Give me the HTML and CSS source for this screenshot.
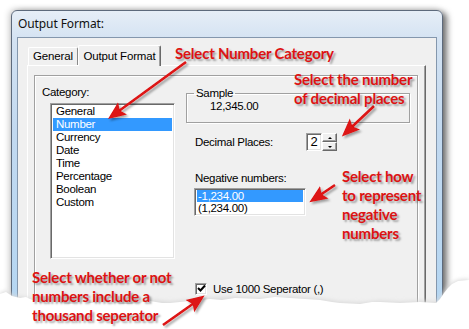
FILE: index.html
```html
<!DOCTYPE html>
<html>
<head>
<meta charset="utf-8">
<link rel="stylesheet" href="styles.css">
</head>
<body>
<div class="stage">
  <div class="window">
    <div class="titlebar">Output Format:</div>
    <div class="client">
      <div class="tabs">
        <div class="tab">General</div>
        <div class="tab active">Output Format</div>
      </div>
      <div class="panel">
        <div class="inner">
          <div class="col-left">
            <div class="lbl cat-lbl">Category:</div>
            <div class="listbox cat">
              <div class="item">General</div>
              <div class="item sel">Number</div>
              <div class="item">Currency</div>
              <div class="item">Date</div>
              <div class="item">Time</div>
              <div class="item">Percentage</div>
              <div class="item">Boolean</div>
              <div class="item">Custom</div>
            </div>
          </div>
          <div class="col-right">
            <fieldset class="group">
              <legend>Sample</legend>
              <div class="sample">12,345.00</div>
            </fieldset>
            <div class="dec-row">
              <span class="dec-lbl">Decimal Places:</span>
              <div class="spin">
                <div class="spin-edit">2</div>
                <div class="spin-btns">
                  <div class="sb"><span class="tri up"></span></div>
                  <div class="sb"><span class="tri down"></span></div>
                </div>
              </div>
            </div>
            <div class="lbl neg-lbl">Negative numbers:</div>
            <div class="listbox neg">
              <div class="item sel">-1,234.00</div>
              <div class="item">(1,234.00)</div>
            </div>
            <div class="check-row">
              <span class="cb"><svg width="9" height="9" viewBox="0 0 9 9"><path d="M1 4 L3.5 6.5 L8 1.5" fill="none" stroke="#000" stroke-width="2"/></svg></span>
              <span>Use 1000 Seperator (,)</span>
            </div>
          </div>
        </div>
      </div>
    </div>
  </div>

  <svg class="torn" width="469" height="329" viewBox="0 0 469 329">
    <defs>
      <filter id="tornshadow" x="-5%" y="-20%" width="110%" height="140%">
        <feGaussianBlur stdDeviation="2"/>
      </filter>
    </defs>
    <polygon fill="#d8d8d8" filter="url(#tornshadow)" points="0,293 6,291 12,295 20,297 30,298 40,302 55,301 70,303 90,302 110,301 130,303 150,300 170,302 190,300 210,298 235,297 260,298 290,297 320,299 340,302 360,303 380,301 400,302 420,301 436,302 440,298 444,292 448,287 452,283 458,280 469,279 469,329 0,329"/>
    <polygon fill="#ffffff" points="0,294 6,292 12,296 20,298 26,297 30,299 40,303 48,301 55,302 70,304 82,302 90,303 110,302 122,304 130,304 150,301 162,303 170,303 190,301 200,300 210,299 222,300 235,298 260,299 275,297 290,298 305,299 320,300 332,302 340,303 360,304 372,302 380,302 400,303 420,302 436,303 440,299 444,293 448,288 452,284 458,281 469,280 469,329 0,329"/>
  </svg>

  <svg class="arrows" width="469" height="329" viewBox="0 0 469 329">
    <defs>
      <filter id="ds" x="-20%" y="-20%" width="140%" height="140%">
        <feDropShadow dx="2" dy="2" stdDeviation="1.2" flood-color="#000" flood-opacity="0.35"/>
      </filter>
      <marker id="ah" markerUnits="userSpaceOnUse" markerWidth="19" markerHeight="16" refX="13" refY="8" orient="auto">
        <path d="M0,0.5 L18,8 L0,15.5 L3.5,8 Z" fill="#dd1212"/>
      </marker>
    </defs>
    <g filter="url(#ds)" stroke="#dd1212" stroke-width="2.5" fill="none">
      <line x1="186" y1="62" x2="112" y2="116" marker-end="url(#ah)"/>
      <line x1="374" y1="106" x2="345.5" y2="133" marker-end="url(#ah)"/>
      <line x1="335" y1="185" x2="313.5" y2="199.5" marker-end="url(#ah)"/>
      <line x1="163" y1="325" x2="200.5" y2="298.5" marker-end="url(#ah)"/>
    </g>
  </svg>

  <div class="note n1">Select Number Category</div>
  <div class="note n2">Select the number<br>of decimal places</div>
  <div class="note n3">Select how<br>to represent<br>negative<br>numbers</div>
  <div class="note n4">Select whether or not<br>numbers include a<br>thousand seperator</div>
</div>
</body>
</html>
```
FILE: styles.css
```css
* { box-sizing: border-box; }
html, body { margin: 0; padding: 0; background: #fff; }
.stage {
  position: relative;
  width: 469px;
  height: 329px;
  overflow: hidden;
  background: #fff;
  padding-top: 10px;
  padding-left: 11px;
  font-family: "Liberation Sans", Arial, sans-serif;
  font-size: 11px;
  color: #000;
}
.window {
  width: 432px;
  height: 310px;
  border: 1px solid #5d6a7c;
  border-radius: 6px 6px 0 0;
  background: linear-gradient(to bottom, #e6eef7 0px, #d3e2f2 30px, #c2d9f0 120px, #b4d6f2 300px);
  box-shadow: 4px 2px 6px rgba(0,0,0,0.55), -2px -1px 6px rgba(0,0,0,0.18);
}
.titlebar {
  height: 26px;
  line-height: 25px;
  padding-left: 6px;
  font-family: "Noto Sans", "Open Sans", sans-serif;
  font-size: 12px;
  letter-spacing: -0.1px;
  color: #111;
}
.client {
  margin: 0 5px;
  height: 290px;
  border: 1px solid #8497ad;
  background: #f0f0f0;
  padding: 7px 0 0 9px;
}
.tabs {
  display: flex;
  align-items: flex-end;
  height: 20px;
}
.tab {
  height: 18px;
  width: 50px;
  margin-left: 1px;
  border-top: 1px solid #fff;
  border-left: 1px solid #fff;
  border-right: 1px solid #8a8a8a;
  border-radius: 2px 2px 0 0;
  text-align: center;
  line-height: 17px;
  background: #f0f0f0;
  letter-spacing: -0.15px;
  font-size: 11.5px;
}
.tab.active {
  position: relative;
  z-index: 1;
  margin-left: 0;
  width: 83px;
  height: 21px;
  margin-bottom: -1px;
  line-height: 20px;
  border-right: 1px solid #696969;
  box-shadow: inset -1px 0 0 #a0a0a0;
}
.panel {
  width: 399px;
  height: 260px;
  border-top: 1px solid #fff;
  border-left: 1px solid #fff;
  border-right: 1px solid #696969;
  border-bottom: 1px solid #696969;
  box-shadow: inset -1px -1px 0 #a0a0a0;
  padding: 9px 0 0 6px;
}
.inner {
  width: 384px;
  height: 240px;
  border: 1px solid #a0a0a0;
  box-shadow: inset 1px 1px 0 #fff, 1px 1px 0 #fff;
  display: flex;
}
.lbl { line-height: 13px; letter-spacing: -0.3px; font-size: 11.5px; }
.col-left { width: 140px; padding-left: 7px; }
.cat-lbl { margin-top: 10px; }
.listbox {
  background: #fff;
  border-top: 1px solid #a0a0a0;
  border-left: 1px solid #a0a0a0;
  border-right: 1px solid #fff;
  border-bottom: 1px solid #fff;
  box-shadow: inset 1px 1px 0 #696969, inset -1px -1px 0 #e3e3e3;
  padding: 1px 2px;
}
.listbox.cat {
  margin: 4px 0 0 8px;
  width: 125px;
  height: 156px;
}
.item {
  height: 13px;
  line-height: 13px;
  padding-left: 3px;
  letter-spacing: -0.3px;
  font-size: 11.5px;
  white-space: nowrap;
}
.item.sel { background: #3399ff; color: #fff; }
.col-right { margin-left: 11px; width: 224px; }
.group {
  margin: 11px 0 0 0;
  padding: 0 0 9px 0;
  width: 224px;
  border: 1px solid #a0a0a0;
  box-shadow: inset 1px 1px 0 #fff, 1px 1px 0 #fff;
  min-width: 0;
}
.group legend {
  margin-left: 7px;
  padding: 0 2px;
  line-height: 13px;
  letter-spacing: -0.3px;
  font-size: 11.5px;
}
.sample {
  padding-left: 23px;
  line-height: 13px;
  letter-spacing: -0.3px;
  font-size: 11.5px;
}
.dec-row {
  display: flex;
  align-items: center;
  margin-top: 10px;
  height: 18px;
  padding-left: 9px;
}
.dec-lbl { width: 111px; letter-spacing: -0.3px; font-size: 11.5px; }
.spin { display: flex; height: 18px; }
.spin-edit {
  width: 16px;
  height: 18px;
  background: #fff;
  border-top: 1px solid #a0a0a0;
  border-left: 1px solid #a0a0a0;
  border-right: 1px solid #fff;
  border-bottom: 1px solid #fff;
  box-shadow: inset 1px 1px 0 #696969, inset -1px -1px 0 #e3e3e3;
  font-size: 13px;
  line-height: 16px;
  text-align: center;
}
.spin-btns { display: flex; flex-direction: column; width: 15px; }
.sb {
  height: 9px;
  background: #f0f0f0;
  border-top: 1px solid #fff;
  border-left: 1px solid #fff;
  border-right: 1px solid #696969;
  border-bottom: 1px solid #696969;
  box-shadow: inset -1px -1px 0 #a0a0a0;
  display: flex;
  align-items: center;
  justify-content: center;
}
.tri { width: 0; height: 0; border-left: 2px solid transparent; border-right: 2px solid transparent; }
.tri.up { border-bottom: 2px solid #000; }
.tri.down { border-top: 2px solid #000; }
.neg-lbl { margin-top: 21px; padding-left: 9px; }
.listbox.neg {
  margin: 3px 0 0 8px;
  width: 112px;
  height: 28px;
}
.listbox.neg .item { height: 12px; line-height: 12px; padding-left: 1px; }
.check-row {
  display: flex;
  align-items: center;
  margin-top: 66px;
  padding-left: 9px;
  height: 13px;
  letter-spacing: -0.3px;
  font-size: 11.5px;
}
.cb {
  width: 12px;
  height: 12px;
  margin-right: 6px;
  background: #fff;
  border-top: 1px solid #a0a0a0;
  border-left: 1px solid #a0a0a0;
  border-right: 1px solid #fff;
  border-bottom: 1px solid #fff;
  box-shadow: inset 1px 1px 0 #696969, inset -1px -1px 0 #e3e3e3;
  display: flex;
  align-items: center;
  justify-content: center;
}
.torn { position: absolute; left: 0; top: 0; }
.arrows { position: absolute; left: 0; top: 0; }
.note {
  position: absolute;
  font-family: "Lato", "Open Sans", sans-serif;
  font-weight: 700;
  font-size: 15px;
  line-height: 19px;
  color: #dd1212;
  text-shadow: 2px 2px 2px rgba(0,0,0,0.35);
  white-space: nowrap;
  letter-spacing: -0.2px;
}
.n1 { left: 175px; top: 44px; }
.n2 { left: 294px; top: 70px; }
.n3 { left: 342px; top: 167px; }
.n4 { left: 32px; top: 268px; }
```
